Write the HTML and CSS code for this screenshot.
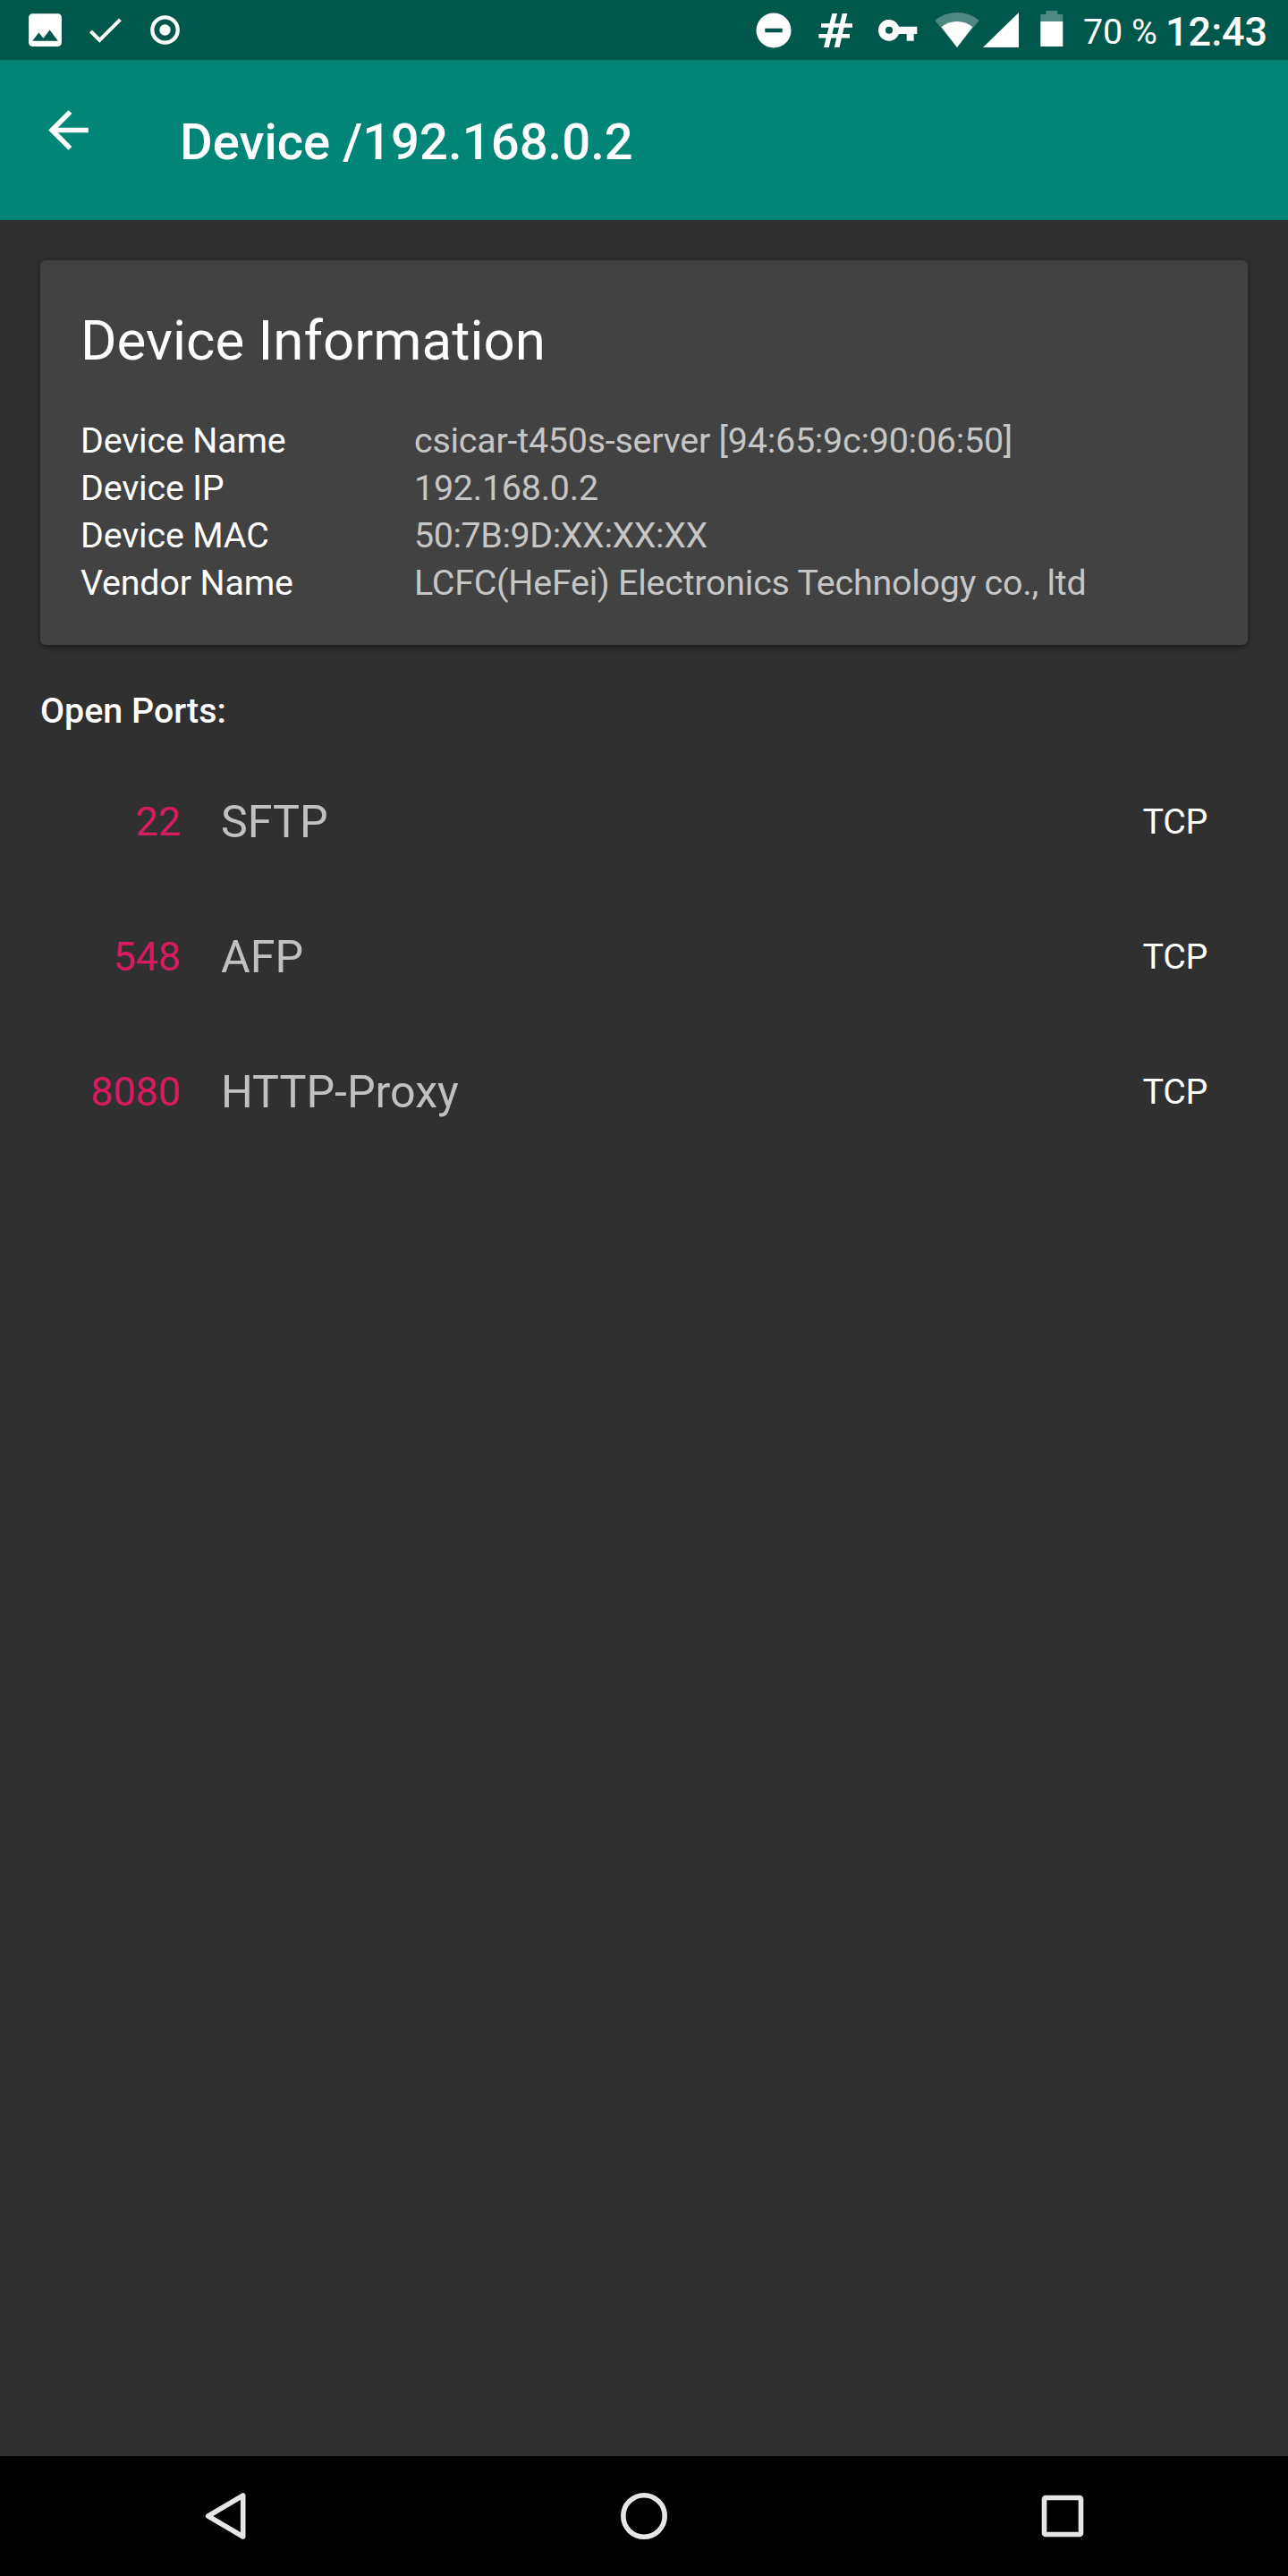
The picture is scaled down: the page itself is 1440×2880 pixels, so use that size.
FILE: index.html
```html
<!DOCTYPE html>
<html lang="en">
<head>
<meta charset="utf-8">
<title>Device /192.168.0.2</title>
<link rel="stylesheet" href="styles.css">
</head>
<body>
<div class="screen">
  <div class="status-bar">
    <div class="notifications">
      <svg class="note-icon" viewBox="0 0 24 24"><path d="M21 19V5c0-1.100-.9-2-2-2H5c-1.100 0-2 .9-2 2v14c0 1.100.9 2 2 2h14c1.100 0 2-.9 2-2zM8.500 13.500l2.500 3.010L14.500 12l4.500 6H5l3.500-4.500z"/></svg>
      <svg class="note-icon" viewBox="0 0 24 24"><path d="M9 16.170L4.830 12l-1.420 1.410L9 19 21 7l-1.410-1.410z"/></svg>
      <svg class="note-icon" viewBox="0 0 49 49"><circle cx="24.500" cy="24.500" r="14.200" fill="none" stroke="#fff" stroke-width="4.300"/><circle cx="24.500" cy="24.500" r="6.200"/></svg>
    </div>
    <div class="system">
      <svg class="dnd" viewBox="0 0 40 40"><path fill-rule="evenodd" d="M20 .5a19.500 19.500 0 1 0 0 39a19.500 19.500 0 1 0 0-39zM10.300 17.700h19.400v4.600H10.300z"/></svg>
      <svg class="hash" viewBox="0 0 38 38"><path d="M15.300 0h5.700L11.700 38H6zM26.700 0h5.600L23.500 38h-5.700zM3 11.300h35v4.400H3zM.3 23H35v4.400H.3z" /></svg>
      <svg class="key" viewBox="0 0 44 24"><path fill-rule="evenodd" d="M23 7.700A11.900 11.900 0 1 0 23 15.900h8.700v7.800h8v-7.800H43.300V7.700zM12 7.800a4 4 0 1 1 0 8a4 4 0 0 1 0-8z"/></svg>
      <svg class="wifi" viewBox="0 0 50 39"><path fill-opacity=".3" d="M.3 8.700Q11 0 25 0T49.700 8.700L25 39z"/><path d="M7.500 16.300Q15 10 25 10T42.300 16.300L25 39z"/></svg>
      <svg class="signal" viewBox="0 0 40 39"><path d="M0 39H40V0z"/></svg>
      <svg class="battery" viewBox="0 0 26 40"><path fill-opacity=".3" d="M6.500 0h12.700v4H25.300v8H.3V4h6.200z"/><path d="M.3 12h25v28H.3z"/></svg>
      <span class="percent">70 %</span>
      <span class="clock">12:43</span>
    </div>
  </div>

  <header class="app-bar">
    <svg class="back" viewBox="0 0 24 24"><path d="M20 11H7.830l5.590-5.590L12 4l-8 8 8 8 1.410-1.410L7.830 13H20v-2z"/></svg>
    <h1 class="title">Device /192.168.0.2</h1>
  </header>

  <main class="content">
    <section class="card">
      <h2 class="card-title">Device Information</h2>
      <dl class="info">
        <dt>Device Name</dt><dd>csicar-t450s-server [94:65:9c:90:06:50]</dd>
        <dt>Device IP</dt><dd>192.168.0.2</dd>
        <dt>Device MAC</dt><dd class="mac">50:7B:9D:XX:XX:XX</dd>
        <dt>Vendor Name</dt><dd>LCFC(HeFei) Electronics Technology co., ltd</dd>
      </dl>
    </section>
    <h3 class="ports-title">Open Ports:</h3>
    <ul class="ports">
      <li class="port"><span class="number">22</span><span class="service">SFTP</span><span class="protocol">TCP</span></li>
      <li class="port"><span class="number">548</span><span class="service">AFP</span><span class="protocol">TCP</span></li>
      <li class="port"><span class="number">8080</span><span class="service">HTTP-Proxy</span><span class="protocol">TCP</span></li>
    </ul>
  </main>

  <nav class="nav-bar">
    <svg class="nav-icon" viewBox="0 0 60 60"><path d="M10.700 30L49.700 7v46z"/></svg>
    <svg class="nav-icon" viewBox="0 0 60 60"><circle cx="30" cy="30" r="23.200"/></svg>
    <svg class="nav-icon" viewBox="0 0 60 60"><rect x="9.500" y="9.500" width="41" height="41" rx="1.500"/></svg>
  </nav>
</div>
</body>
</html>
```

FILE: styles.css
```css
* {
  box-sizing: border-box;
  margin: 0;
  padding: 0;
}

body {
  background: #303030;
  color: #fff;
  font-family: Roboto, sans-serif;
  font-size: 39.375px;
}

.screen {
  display: flex;
  flex-direction: column;
  width: 1440px;
  height: 2880px;
}

svg {
  display: block;
  flex: none;
  fill: #fff;
}

.status-bar {
  display: flex;
  justify-content: space-between;
  height: 67px;
  padding: 0 22px 0 26px;
  background: #00574b;
}

.notifications,
.system {
  display: flex;
  align-items: center;
}

.notifications {
  gap: 18px;
}

.note-icon {
  width: 49px;
  height: 49px;
}

.dnd {
  width: 40px;
  height: 40px;
}

.hash {
  width: 38px;
  height: 38px;
  margin-left: 30px;
}

.key {
  width: 44px;
  height: 24px;
  margin-left: 29px;
}

.wifi {
  width: 50px;
  height: 39px;
  margin-left: 19px;
}

.signal {
  width: 40px;
  height: 39px;
  margin-left: 4px;
}

.battery {
  width: 26px;
  height: 40px;
  margin: 0 22px 3px 24px;
}

.percent,
.clock {
  line-height: 54px;
  padding-top: 4px;
  white-space: nowrap;
}

.percent {
  width: 92px;
}

.clock {
  width: 115px;
  font-size: 45px;
  font-weight: 500;
}

.app-bar {
  display: flex;
  align-items: flex-start;
  gap: 91px;
  height: 179px;
  padding: 45px 43px 0;
  background: #008577;
}

.back {
  width: 67px;
  height: 67px;
}

.title {
  padding-top: 14px;
  font-size: 56.25px;
  font-weight: 500;
  line-height: 66px;
}

.content {
  flex: 1;
  padding: 45px;
}

.card {
  height: 430px;
  padding: 45px;
  border-radius: 6px;
  background: #424242;
  box-shadow: 0 3px 8px rgba(0, 0, 0, 0.3), 0 1px 4px rgba(0, 0, 0, 0.2);
}

.card-title {
  margin-bottom: 40px;
  font-size: 61.875px;
  font-weight: 400;
  line-height: 90px;
}

.info {
  display: grid;
  grid-template-columns: 373px 1fr;
  letter-spacing: -0.15px;
  line-height: 53px;
}

.info dd {
  color: #c6c6c6;
  letter-spacing: -0.21px;
}

.info .mac {
  letter-spacing: -0.4px;
}

.ports-title {
  margin: 47px 0 22px;
  font-size: 39.375px;
  font-weight: 500;
  line-height: 53px;
}

.ports {
  list-style: none;
}

.port {
  display: flex;
  align-items: center;
  height: 151px;
  padding-right: 45px;
}

.number {
  width: 157px;
  color: #d81b60;
  font-size: 45px;
  letter-spacing: -0.1px;
  text-align: right;
}

.service {
  flex: 1;
  margin-left: 45px;
  color: #c1c1c1;
  font-size: 50.2px;
}

.protocol {
  letter-spacing: -0.3px;
}

.nav-bar {
  display: flex;
  justify-content: space-around;
  align-items: center;
  height: 134px;
  padding: 0 18px;
  background: #000;
}

.nav-icon {
  width: 60px;
  height: 60px;
  fill: none;
  stroke: #e6e6e6;
  stroke-width: 5.6;
  stroke-linejoin: round;
}
```
